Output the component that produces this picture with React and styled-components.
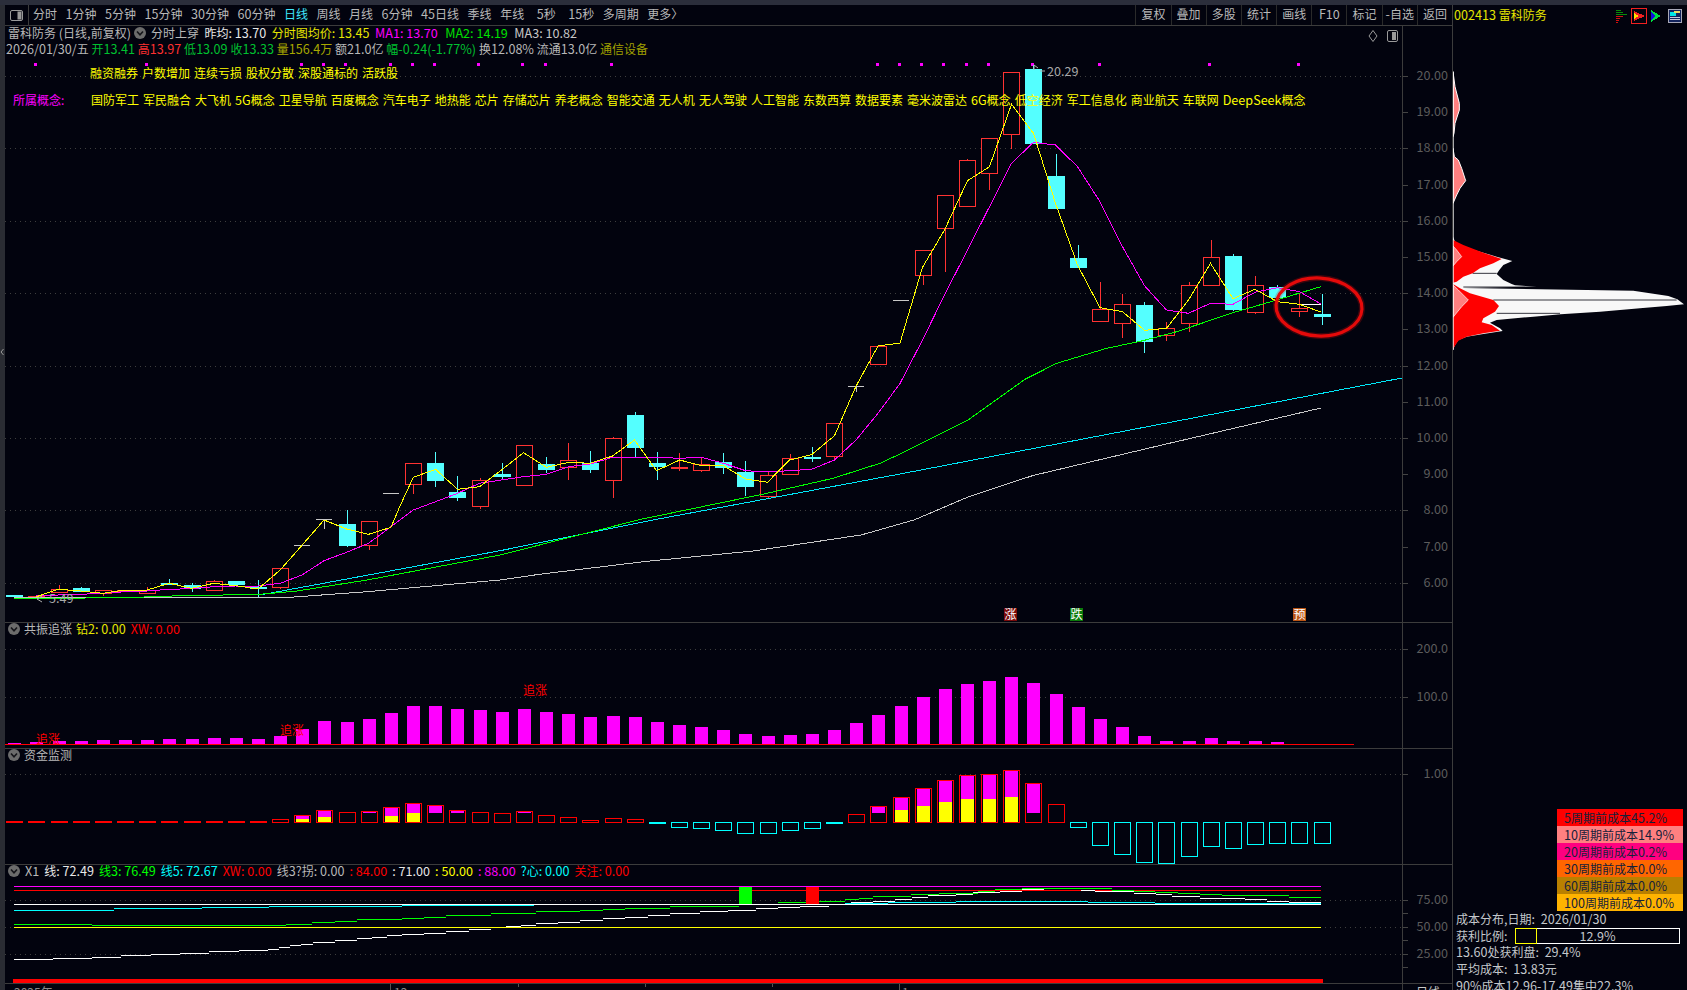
import React from 'react';
import styled, { createGlobalStyle } from 'styled-components';

const BG = '#02030e';
const LINE = '#3c3c3c';

const GlobalStyle = createGlobalStyle`
  html, body {
    margin: 0;
    padding: 0;
    background: ${BG};
  }
  body {
    font-family: "Noto Sans CJK SC", "Liberation Sans", sans-serif;
    font-size: 12px;
    line-height: 14px;
    color: #b8b8b8;
  }
  svg text {
    font-family: "Noto Sans CJK SC", "Liberation Sans", sans-serif;
  }
`;

const Frame = styled.div`
  width: 1687px;
  height: 990px;
  overflow: hidden;
  display: flex;
  flex-direction: column;
  background: ${BG};
`;

const TopStrip = styled.div`
  height: 5px;
  flex: none;
  background: #2b2e3b;
`;

const Shell = styled.div`
  flex: 1;
  min-height: 0;
  display: flex;
`;

const Rail = styled.div`
  width: 5px;
  flex: none;
  background: #2a2c33;
  position: relative;
`;

const RailArrow = styled.svg`
  position: absolute;
  left: 0;
  top: 342px;
`;

const Workspace = styled.div`
  width: 1447px;
  flex: none;
  display: flex;
  flex-direction: column;
`;

const Toolbar = styled.div`
  height: 20px;
  flex: none;
  display: flex;
  align-items: center;
  border-bottom: 1px solid ${LINE};
  white-space: nowrap;
`;

const ToggleBox = styled.div`
  width: 23px;
  height: 20px;
  flex: none;
  border-right: 1px solid ${LINE};
  display: flex;
  align-items: center;
  justify-content: center;
`;

const PeriodList = styled.div`
  display: flex;
  align-items: center;
  gap: 8.5px;
  padding-left: 4px;
  padding-bottom: 2px;
`;

const Period = styled.span`
  color: ${(p) => (p.$active ? '#3fe8ff' : '#b8b8b8')};
  margin-left: ${(p) => p.$shift || 0}px;
`;

const ToolGroup = styled.div`
  margin-left: auto;
  display: flex;
  height: 100%;
`;

const ToolButton = styled.span`
  width: 35.2px;
  border-left: 1px solid #2a2a2a;
  display: flex;
  align-items: center;
  justify-content: center;
  padding-bottom: 2px;
  box-sizing: border-box;
  color: #b8b8b8;
`;

const Pane = styled.div`
  height: ${(p) => p.$h}px;
  flex: none;
  display: flex;
  border-bottom: 1px solid ${LINE};
  box-sizing: border-box;
`;

const Plot = styled.div`
  width: 1397px;
  flex: none;
  position: relative;
`;

const ChartSvg = styled.svg`
  display: block;
`;

const AxisCol = styled.div`
  width: 50px;
  flex: none;
  border-left: 1px solid ${LINE};
  box-sizing: border-box;
`;

const Legend = styled.div`
  position: absolute;
  left: 1px;
  top: ${(p) => p.$top ?? -1}px;
  right: 0;
  display: flex;
  flex-direction: column;
  white-space: nowrap;
`;

const LegendRow = styled.div`
  height: 16px;
  margin-top: ${(p) => p.$mt || 0}px;
  display: flex;
  align-items: center;
  gap: ${(p) => (p.$gap === undefined ? 4 : p.$gap)}px;
  padding-left: ${(p) => p.$pl || 0}px;
`;

const Val = styled.span`
  color: ${(p) => p.$c || '#b8b8b8'};
  margin-left: ${(p) => p.$ml || 0}px;
`;

// digits and Latin run a little larger than the CJK in the terminal's font
const Num = styled.span`
  font-size: 12.6px;
`;

const Chevron = styled.svg`
  flex: none;
  margin-left: ${(p) => p.$ml || 0}px;
`;

const RowLabel = styled.span`
  width: 77px;
  flex: none;
  padding-left: 7px;
  box-sizing: border-box;
  color: #ff00ff;
`;

const ChartMark = styled.span`
  position: absolute;
  color: #ff0000;
  left: ${(p) => p.$x - 5}px;
  top: ${(p) => p.$y}px;
  line-height: 16px;
`;

const CornerIcons = styled.svg`
  position: absolute;
  left: 1361px;
  top: 3px;
`;

const DateRow = styled.div`
  flex: 1;
  display: flex;
  overflow: hidden;
`;

const RightPanel = styled.aside`
  width: 235px;
  flex: none;
  border-left: 1px solid ${LINE};
  display: flex;
  flex-direction: column;
`;

const RightHeader = styled.div`
  height: 21px;
  flex: none;
  display: flex;
  align-items: center;
  gap: 4px;
  padding-left: 1px;
  color: #e6e600;
  white-space: nowrap;
`;

const HeaderName = styled.span`
  padding-bottom: 2px;
`;

const HeaderIcons = styled.svg`
  margin-left: auto;
  flex: none;
`;

const Spacer = styled.div`
  flex: 1;
`;

const CostLegend = styled.div`
  align-self: flex-end;
  margin-right: 5px;
  width: 126px;
  flex: none;
`;

const CostRow = styled.div`
  height: 17px;
  line-height: 17px;
  padding-left: 7px;
  background: ${(p) => p.$bg};
  color: #15203a;
  white-space: nowrap;
`;

const Info = styled.div`
  height: 79px;
  flex: none;
  padding-left: 3px;
  overflow: hidden;
  color: #c4c8cc;
  white-space: nowrap;
`;

const InfoLine = styled.div`
  height: 16.7px;
  line-height: 16.7px;
  display: flex;
  align-items: center;
`;

const InfoText = styled.span`
  white-space: pre;
`;

const ProfitBar = styled.div`
  position: relative;
  width: 165px;
  height: 16px;
  margin-left: auto;
  margin-right: 8px;
  box-sizing: border-box;
  border: 1px solid #ffffff;
  text-align: center;
  line-height: 14px;
`;

const ProfitFill = styled.div`
  position: absolute;
  left: -1px;
  top: -1px;
  bottom: -1px;
  width: 22px;
  box-sizing: border-box;
  border: 1px solid #ffff00;
`;

// wraps the ASCII runs of a label so they get the digit size
const mix = (text) =>
  text.split(/([\x20-\x7e]+)/).filter(Boolean).map((part, i) =>
    /^[\x20-\x7e]+$/.test(part) ? <Num key={i}>{part}</Num> : part
  );

// ---- chart data, all in page pixels ----

const cx = (i) => 14.3 + 22.156 * i;

// type, body top, body bottom, wick top, wick bottom
const candles = [
  ['c', 595, 597], ['r', 595.5, 597], ['r', 588.5, 591.7, 585, 591.7], ['c', 588, 592, 587, 592],
  ['r', 590.3, 593.7, 590.3, 596], ['r', 590, 591], ['r', 590, 592.7, 587, 592.7], ['c', 583, 585.3, 579, 585.3],
  ['c', 585, 588.7, 583, 591.7], ['r', 581.3, 590.7, 580, 590.7], ['c', 581, 585], ['c', 586.7, 589, 580, 596.7],
  ['r', 568.3, 587.3, 568.3, 588.5], ['w', 545.3, 545.3], ['w', 519.3, 519.3, 519.3, 528.7], ['c', 524.3, 546, 510, 547],
  ['r', 521.3, 545.7, 521.3, 549.7], ['w', 493.3, 493.3], ['r', 463.3, 484.7, 463.3, 494], ['c', 463, 481, 452.3, 486.7],
  ['c', 492, 498, 476, 501], ['r', 480.3, 506.7, 478.3, 509], ['c', 474, 477, 463.3, 480], ['r', 445.3, 485.7],
  ['c', 464, 470, 457.3, 472.7], ['r', 460.3, 467.7, 443, 480], ['c', 463, 470, 451, 472.7], ['r', 438.3, 480.3, 437.3, 497.7],
  ['c', 415, 447.7, 412.3, 457], ['c', 463, 467, 452, 479.7], ['s', 467, 469, 453, 470.7], ['r', 463.7, 469.7, 457.3, 472],
  ['c', 462, 468, 453.3, 474], ['c', 472, 487, 461, 496], ['r', 475.3, 496.7, 471.3, 498.7], ['r', 458.3, 474.7, 454, 474.7],
  ['c', 457, 458, 447.3, 462], ['r', 423.3, 456.7, 423.3, 459.3], ['w', 386.3, 386.3, 386.3, 392], ['r', 346, 364],
  ['w', 300, 300], ['r', 250.3, 275.3, 250.3, 284.7], ['r', 195.3, 228.3, 195.3, 271.7], ['r', 160.3, 206.7, 158.7, 206.7],
  ['r', 138.3, 173.3, 138.3, 190], ['r', 72.3, 134.7, 72.3, 149], ['c', 69, 143.7, 65, 143.7], ['c', 176, 208.7, 154.3, 208.7],
  ['c', 258, 267.7, 245, 267.7], ['r', 309.3, 321.7, 282, 321.7], ['r', 304.3, 323.7, 294, 337.7], ['c', 305, 341.7, 302.3, 352.7],
  ['r', 328.3, 335, 322.3, 340.7], ['r', 285.3, 323.7, 282, 331.7], ['r', 257.3, 285.7, 240.3, 285.7], ['c', 256, 310, 254, 310.7],
  ['r', 285.3, 312.7, 276, 314.3], ['c', 287, 298.3, 285.3, 298.3], ['r', 308.3, 311.7, 293.3, 316.7], ['c', 314.3, 317, 294, 325],
];

const ma1 = [
  [36.4, 596.7], [58.4, 589.3], [80.5, 591], [102.6, 593.3], [124.8, 590], [147, 590], [169.4, 583.3], [191.5, 588.3],
  [213.7, 583.3], [235.8, 585.7], [258, 589], [280.2, 570], [302, 545.3], [324, 520], [346.5, 529], [368.5, 534.3],
  [391, 527.3], [400, 506], [413.3, 477.3], [435.6, 469.3], [457.5, 489.3], [479.5, 486.7], [501.5, 470], [523.5, 452.7],
  [546.5, 467.3], [568.7, 462.3], [590.5, 463.3], [612.5, 456], [634.5, 440], [656.5, 470.7], [679.6, 460], [701.5, 465.7],
  [723.5, 465.7], [745.5, 479], [767.5, 482.3], [789.5, 460], [811.5, 454.7], [834.5, 435.7], [856, 386.3], [878, 346],
  [900, 343], [922.5, 267.3], [944.5, 230], [967.5, 180.7], [989.5, 166.7], [1011.5, 104.3], [1033.5, 133.3], [1055.5, 203.3],
  [1077.5, 265], [1100, 307.7], [1122.5, 311.7], [1144.5, 330.3], [1166.5, 328.3], [1188.5, 300], [1210.5, 263.3],
  [1233, 298.7], [1255, 289.3], [1277.5, 301.7], [1299.5, 304.3], [1321.5, 312.3],
];

const ma2 = [
  [36.4, 596], [58.4, 595], [80.5, 594.3], [102.6, 593.3], [124.8, 591.7], [147, 591], [169.4, 589.3], [191.5, 588.7],
  [213.7, 586.7], [235.8, 586], [258, 586], [280.2, 583.3], [302, 575], [324, 560.7], [346.5, 552.3], [368.5, 543.3],
  [391, 526.7], [413.3, 510], [435.6, 501.7], [457.5, 493.3], [479.5, 483.3], [501.5, 480], [523.5, 476.7], [546.5, 474.3],
  [568.7, 466.7], [590.5, 464], [612.5, 457.3], [634.5, 457.3], [656.5, 457.3], [679.6, 458.3], [701.5, 457.3], [723.5, 463.3],
  [745.5, 470.7], [767.5, 472], [789.5, 470.7], [811.5, 469.3], [834.5, 460], [856, 440], [878, 413.3], [900, 383.5],
  [922.5, 340], [944.5, 295], [967.5, 250], [989.5, 206.7], [1011.5, 163.3], [1033.5, 142.3], [1055.5, 145], [1077.5, 166.7],
  [1100, 201.7], [1122.5, 246.7], [1144.5, 285.7], [1166.5, 310], [1188.5, 313.3], [1210.5, 303.3], [1233, 304.3],
  [1255, 292.3], [1277.5, 287.7], [1299.5, 291.7], [1321.5, 304.3],
];

const ma3 = [
  [14, 599], [136, 597.3], [200, 595], [223, 595], [260, 594.3], [297, 591], [367, 580], [500, 555], [641, 519.3],
  [767, 493.3], [833, 478.3], [880, 463.3], [900, 454], [968, 420], [1025, 379.3], [1056.7, 363.3], [1106.7, 348.3],
  [1143, 340.7], [1176.7, 331.7], [1233, 312.7], [1276.7, 300], [1320.7, 286.7],
];

const ma4 = [[260, 595], [500, 550.7], [656.7, 519.3], [900, 474], [1402, 378]];

const ma5 = [
  [14, 597], [290, 597.3], [367, 591.7], [500, 580], [538, 574.5], [645, 561.5], [753, 551], [861, 535], [914, 520], [968, 497],
  [1033, 475.5], [1162, 445], [1321, 408],
];

const signalDots = [35, 146.4, 301, 323.6, 345.5, 390, 412.5, 434.8, 478, 522, 545, 611, 877.5, 899.5, 921.5, 943.5, 966, 988, 1032, 1099, 1209, 1298];

// bar tops for the 共振追涨 pane, one per candle
const surge = [
  369, 366, 363, 363, 360, 360, 360, 357, 357, 354, 354, 357, 348, 327, 303, 306, 297, 279, 258, 258,
  267, 270, 276, 267, 276, 282, 291, 288, 291, 306, 315, 321, 330, 342, 348, 345, 342, 330, 309, 285,
  258, 231, 207, 192, 183, 171, 189, 222, 261, 297, 321, 348, 363, 363, 354, 363, 363, 366,
];

// kind, box end, magenta top, yellow top (zoom rows, zero at 607)
const flow = [
  ['rs', 604], ['rs', 604], ['r', 602], ['r', 602], ['r', 602], ['r', 602], ['r', 602], ['r', 602], ['r', 602], ['r', 602],
  ['r', 602], ['rs', 604], ['r', 598], ['r', 586, 586, 597], ['r', 571, 571, 591], ['r', 577, 577], ['r', 574, 574], ['r', 562, 562, 588], ['r', 550, 550, 579], ['r', 556, 556],
  ['r', 571, 571], ['r', 577, 577], ['r', 580], ['r', 574, 574], ['r', 586], ['r', 592], ['r', 601], ['r', 595], ['r', 598], ['cs', 609],
  ['c', 620], ['c', 623], ['c', 629], ['c', 638], ['c', 638], ['c', 629], ['c', 623], ['cs', 608], ['r', 583], ['r', 559, 559],
  ['r', 532, 532, 570], ['r', 504, 504, 558], ['r', 481, 481, 546], ['r', 466, 466, 537], ['r', 463, 463, 537], ['r', 451, 451, 531], ['r', 490, 490], ['r', 553], ['c', 620], ['c', 674],
  ['c', 701], ['c', 725], ['c', 728], ['c', 707], ['c', 677], ['c', 683], ['c', 671], ['c', 668], ['c', 668], ['c', 668],
];

const zy = (v) => 620 + v / 3;

const x1Cyan = [[14, 910.3], [25, 909.7], [114, 908.3], [202, 907.3], [269, 906.3], [402, 905.3], [534, 904.3], [600, 903.7], [845, 902.7], [888, 901.7], [956, 900.7], [1088, 901.7], [1155, 902.7], [1321, 904.3]];
const x1Green = [[14, 913], [92, 916], [269, 916], [286, 911], [312, 906], [357, 898], [402, 894], [446, 886], [491, 880], [536, 874], [580, 870], [625, 863], [670, 859], [700, 857], [778, 847], [818, 842], [845, 836], [873, 829], [911, 823], [939, 818], [978, 813], [995, 808], [1022, 805], [1088, 805], [1112, 809], [1155, 816], [1178, 820], [1200, 823], [1222, 826], [1267, 826], [1289, 832], [1321, 835]].map(([x, y]) => [x, zy(y)]);
const x1White = [[14, 1018], [91.5, 1010], [180, 998], [268, 986], [312.5, 966], [357, 955], [402, 942], [446, 933], [491, 922], [536, 910], [580, 899], [625, 890], [670, 880], [700, 874], [756, 865], [800, 857], [829, 851], [873, 842], [895, 836], [928, 826], [956, 821], [973, 817], [1000, 814], [1022, 808], [1044, 804], [1067, 804], [1095, 814], [1134, 820], [1156, 823], [1172, 827], [1200, 833], [1222, 835], [1245, 838], [1267, 842], [1289, 845], [1321, 851]].map(([x, y]) => [x, zy(y)]);

const poly = (pts) => pts.map((p) => p.join(',')).join(' ');

// staircase through the points, like the terminal draws it
const stairs = (pts) => {
  const out = [];
  for (let i = 0; i < pts.length - 1; i++) {
    const [x0, y0] = pts[i];
    const [x1, y1] = pts[i + 1];
    const steps = Math.max(1, Math.round(Math.abs(y1 - y0) / 1.5));
    for (let s = 0; s < steps; s++) {
      out.push(`M${x0 + ((x1 - x0) * s) / steps} ${Math.round(y0 + ((y1 - y0) * s) / steps)}H${x0 + ((x1 - x0) * (s + 1)) / steps}`);
    }
  }
  return out.join('');
};

const histWhite = [[159, 530], [165, 545], [190, 560], [240, 575], [290, 590], [337, 603], [310, 615], [298, 630], [290, 642], [310, 660], [335, 672], [345, 676], [410, 680], [190, 684], [700, 692], [805, 708], [832, 718], [852, 733], [800, 738], [720, 745], [600, 755], [482, 763], [400, 770], [290, 780], [270, 788], [300, 805], [308, 813], [250, 822], [200, 830], [175, 840], [165, 855], [159, 870]];
const histRedA = [[159, 540], [190, 555], [250, 578], [305, 597], [280, 610], [240, 625], [218, 640], [190, 650], [170, 665], [159, 668]];
const histRedB = [[159, 672], [180, 685], [210, 700], [280, 720], [297, 738], [285, 755], [250, 775], [245, 787], [275, 795], [300, 812], [250, 820], [200, 830], [175, 842], [159, 866]];
const histPinkA = [[159, 558], [170, 570], [185, 590], [170, 605], [159, 618]];
const histPinkB = [[159, 675], [175, 690], [205, 720], [185, 740], [159, 772]];
const histPinkC = [[159, 35], [165, 80], [178, 130], [178, 150], [165, 190], [162, 220], [159, 230]];
const histPinkD = [[159, 265], [163, 290], [175, 300], [185, 325], [197, 362], [180, 385], [170, 405], [159, 430]];

const DownCircle = ({ ml }) => (
  <Chevron $ml={ml} width="12" height="12" viewBox="0 0 12 12">
    <circle cx="6" cy="6" r="6" fill="#6c6c6c" />
    <path d="M3 4.5 L6 7.8 L9 4.5" fill="none" stroke="#15151a" strokeWidth="1.6" />
  </Chevron>
);

function Candle({ i, d }) {
  const [kind, top, bottom, wickTop = top, wickBottom = bottom] = d;
  const x = Math.round(cx(i));
  if (kind === 'w') {
    return (
      <g stroke="#c8c8c8">
        <path d={`M${x - 8} ${top + 0.5}H${x + 8}M${x + 0.5} ${wickTop}V${wickBottom}`} />
      </g>
    );
  }
  if (kind === 'c') {
    return (
      <g>
        <path d={`M${x + 0.5} ${wickTop}V${wickBottom}`} stroke="#54ffff" />
        <rect x={x - 8} y={top} width="17" height={Math.max(bottom - top, 1.5)} fill="#54ffff" />
      </g>
    );
  }
  if (kind === 's') {
    return (
      <g fill="#ff3232">
        <path d={`M${x + 0.5} ${wickTop}V${wickBottom}`} stroke="#ff3232" />
        <rect x={x - 8} y={top} width="17" height={bottom - top} />
      </g>
    );
  }
  return (
    <g stroke="#ff3232">
      <path d={`M${x + 0.5} ${wickTop}V${wickBottom}`} />
      <rect x={x - 8 + 0.5} y={Math.round(top) + 0.5} width="16" height={Math.max(Math.round(bottom - top), 1)} fill={BG} />
    </g>
  );
}

function Grid({ rows }) {
  return (
    <g stroke="#3e3e3e" strokeDasharray="1 4">
      {rows.map((y) => (
        <path key={y} d={`M5 ${y + 0.5}H1402`} />
      ))}
    </g>
  );
}

function Signal({ x, bg, children }) {
  return (
    <g>
      <rect x={x} y="608" width="13" height="13" fill={bg} />
      <text x={x + 6.5} y="619" fontSize="12" textAnchor="middle" fill="#fff">{children}</text>
    </g>
  );
}

function MainChart() {
  const gridRows = [20, 18, 16, 14, 12, 10, 8, 6].map((p) => Math.round(76 + (20 - p) * 36.2));
  return (
    <ChartSvg width="1397" height="596" viewBox="5 26 1397 596" shapeRendering="crispEdges">
      <Grid rows={gridRows} />
      {signalDots.map((x) => (
        <rect key={x} x={x - 1.5} y="63" width="3" height="3" fill="#ff00ff" />
      ))}
      {candles.map((d, i) => <Candle key={i} i={i} d={d} />)}
      <path d="M1300 304.5H1321" stroke="#ffffff" />
      <polyline points={poly(ma5)} fill="none" stroke="#c8c8c8" />
      <polyline points={poly(ma4)} fill="none" stroke="#00e8f8" />
      <polyline points={poly(ma3)} fill="none" stroke="#00ff00" />
      <polyline points={poly(ma2)} fill="none" stroke="#ff00ff" />
      <polyline points={poly(ma1)} fill="none" stroke="#ffff00" />
      <g fill="none" stroke="#b0b0b0" shapeRendering="auto">
        <path d="M1034 65 L1038 68 M1034 65 L1034 70 M1040 71H1045" />
        <path d="M42 596 L37 599 L42 602" />
      </g>
      <text x="1047" y="76" fontSize="12.6" fill="#a8a8a8">20.29</text>
      <text x="49" y="603" fontSize="12.6" fill="#a8a8a8">5.49</text>
      <Signal x={1004} bg="#7a0a0a">涨</Signal>
      <Signal x={1070} bg="#0a7a0a">跌</Signal>
      <Signal x={1293} bg="#bb5514">预</Signal>
      <g fill="none" shapeRendering="auto" transform="rotate(3 1319 307)">
        <ellipse cx="1319" cy="307" rx="43" ry="29" stroke="#e40a0a" strokeOpacity="0.25" strokeWidth="6" />
        <ellipse cx="1319" cy="307" rx="43" ry="29" stroke="#e40a0a" strokeWidth="3.2" />
      </g>
    </ChartSvg>
  );
}

function SurgeChart() {
  return (
    <ChartSvg width="1397" height="125" viewBox="5 623 1397 125" shapeRendering="crispEdges">
      <Grid rows={[649, 697]} />
      {surge.map((v, i) => (
        <rect key={i} x={Math.round(cx(i)) - 6} y={zy(v)} width="13" height={744 - zy(v)} fill="#ff00ff" />
      ))}
      <path d="M5 744.5H1354" stroke="#ff0000" />
    </ChartSvg>
  );
}

function FlowBar({ i, d }) {
  const [kind, end, magenta, yellow] = d;
  const x = Math.round(cx(i));
  const baseY = 822;
  const color = kind[0] === 'r' ? '#ff0000' : '#00ffff';
  const y0 = Math.round(kind[0] === 'r' ? zy(end) : baseY);
  const y1 = Math.round(kind[0] === 'r' ? baseY : zy(end));
  if (kind.length > 1) {
    return <rect x={x - 8} y={y0} width="17" height={Math.max(y1 - y0, 2)} fill={color} />;
  }
  return (
    <g>
      {magenta !== undefined && (
        <rect x={x - 6} y={zy(magenta)} width="13" height={(yellow ? zy(yellow) : 813) - zy(magenta)} fill="#ff00ff" />
      )}
      {yellow !== undefined && (
        <rect x={x - 6} y={zy(yellow)} width="13" height={baseY - zy(yellow)} fill="#ffff00" />
      )}
      <rect x={x - 7.5} y={y0 + 0.5} width="16" height={Math.max(y1 - y0, 1)} fill="none" stroke={color} />
    </g>
  );
}

function FlowChart() {
  return (
    <ChartSvg width="1397" height="115" viewBox="5 749 1397 115" shapeRendering="crispEdges">
      <Grid rows={[774]} />
      {flow.map((d, i) => <FlowBar key={i} i={i} d={d} />)}
    </ChartSvg>
  );
}

function OscChart() {
  return (
    <ChartSvg width="1397" height="118" viewBox="5 865 1397 118" shapeRendering="crispEdges">
      <Grid rows={[900, 927, 954]} />
      <path d="M14 886.5H1321" stroke="#ff00ff" />
      <path d="M14 890.5H1321" stroke="#ff0000" />
      <path d={stairs(x1White)} stroke="#ffffff" fill="none" />
      <path d={stairs(x1Green)} stroke="#00ff00" fill="none" />
      <path d={stairs(x1Cyan)} stroke="#00ffff" fill="none" />
      <path d="M14 904.5H1321" stroke="#ffffff" />
      <path d="M14 927.5H1321" stroke="#ffff00" />
      <rect x="739" y="887" width="13" height="17" fill="#00ff00" />
      <rect x="806" y="887" width="13" height="17" fill="#ff0000" />
      <rect x="13" y="979" width="1310" height="4" fill="#ff0000" />
    </ChartSvg>
  );
}

function Axis({ height, top, labels, ticks }) {
  return (
    <AxisCol>
      <ChartSvg width="49" height={height} viewBox={`1402 ${top} 49 ${height}`}>
        {ticks.map((y) => (
          <path key={y} d={`M1402 ${y + 0.5}H1407`} stroke="#444" shapeRendering="crispEdges" />
        ))}
        {labels.map(([text, y]) => (
          <text key={text} x="1447" y={y + 4} fontSize="12.6" textAnchor="end" fill="#5c5c5c">{text}</text>
        ))}
      </ChartSvg>
    </AxisCol>
  );
}

const priceLabels = [];
for (let p = 20; p >= 6; p--) {
  priceLabels.push([`${p}.00`, Math.round(76 + (20 - p) * 36.2)]);
}

const periods = [
  ['分时'], ['1分钟'], ['5分钟'], ['15分钟'], ['30分钟'], ['60分钟'], ['日线', true], ['周线'], ['月线'], ['6分钟'],
  ['45日线'], ['季线'], ['年线'], ['5秒', false, 4], ['15秒', false, 4], ['多周期'], ['更多〉'],
];
const tools = ['复权', '叠加', '多股', '统计', '画线', 'F10', '标记', '-自选', '返回'];
const tags = ['融资融券', '户数增加', '连续亏损', '股权分散', '深股通标的', '活跃股'];
const concepts = ['国防军工', '军民融合', '大飞机', '5G概念', '卫星导航', '百度概念', '汽车电子', '地热能', '芯片', '存储芯片', '养老概念', '智能交通', '无人机', '无人驾驶', '人工智能', '东数西算', '数据要素', '毫米波雷达', '6G概念', '低空经济', '军工信息化', '商业航天', '车联网', 'DeepSeek概念'];
const costs = [
  ['#ff0000', '5周期前成本45.2%'],
  ['#ff8080', '10周期前成本14.9%'],
  ['#ff0080', '20周期前成本0.2%'],
  ['#ff6600', '30周期前成本0.0%'],
  ['#b98000', '60周期前成本0.0%'],
  ['#ffb300', '100周期前成本0.0%'],
];
const quoteRow = [
  ['#b8b8b8', '2026/01/30/五'],
  ['#00c030', '开13.41'],
  ['#ff3030', '高13.97'],
  ['#00c030', '低13.09'],
  ['#00c030', '收13.33'],
  ['#a8a800', '量156.4万'],
  ['#b8b8b8', '额21.0亿'],
  ['#00c030', '幅-0.24(-1.77%)'],
  ['#b8b8b8', '换12.08%'],
  ['#b8b8b8', '流通13.0亿'],
  ['#a0a000', '通信设备'],
];
const oscRow = [
  ['#e8e8e8', '线: 72.49'],
  ['#00ff00', '线3: 76.49'],
  ['#00ffff', '线5: 72.67'],
  ['#ff0000', 'XW: 0.00'],
  ['#b8b8b8', '线3?拐: 0.00'],
  ['#ff0000', ': 84.00'],
  ['#e8e8e8', ': 71.00'],
  ['#ffff00', ': 50.00'],
  ['#ff00ff', ': 88.00'],
  ['#00ffff', '?心: 0.00'],
  ['#ff0000', '关注: 0.00'],
];

export default function App() {
  return (
    <Frame>
      <GlobalStyle />
      <TopStrip />
      <Shell>
        <Rail>
          <RailArrow width="5" height="10" viewBox="0 0 5 10">
            <path d="M3.5 2 L1 5 L3.5 8" fill="none" stroke="#999" />
          </RailArrow>
        </Rail>
        <Workspace>
          <Toolbar>
            <ToggleBox>
              <svg width="13" height="11" viewBox="0 0 13 11">
                <rect x="0.5" y="0.5" width="12" height="10" rx="1.5" fill="none" stroke="#9a9a9a" />
                <rect x="7.5" y="1.5" width="4" height="8" fill="#9a9a9a" />
              </svg>
            </ToggleBox>
            <PeriodList>
              {periods.map(([label, active, shift]) => (
                <Period key={label} $active={active} $shift={shift}>{mix(label)}</Period>
              ))}
            </PeriodList>
            <ToolGroup>
              {tools.map((t) => <ToolButton key={t}>{mix(t)}</ToolButton>)}
            </ToolGroup>
          </Toolbar>

          <Pane $h={597}>
            <Plot>
              <MainChart />
              <Legend>
                <LegendRow $gap={5.5} $pl={2}>
                  <Val>{mix('雷科防务 (日线,前复权)')}</Val>
                  <DownCircle ml={-2} />
                  <Val $ml={-1}>分时上穿</Val>
                  <Val $c="#e8e8e8">{mix('昨均: 13.70')}</Val>
                  <Val $c="#e6e600">{mix('分时图均价: 13.45')}</Val>
                  <Val $c="#ff00ff">{mix('MA1: 13.70')}</Val>
                  <Val $c="#00e000" $ml={2}>{mix('MA2: 14.19')}</Val>
                  <Val $c="#c8c8c8" $ml={1}>{mix('MA3: 10.82')}</Val>
                </LegendRow>
                <LegendRow $gap={2.8}>
                  {quoteRow.map(([c, t]) => <Val key={t} $c={c}>{mix(t)}</Val>)}
                </LegendRow>
                <LegendRow $mt={7.5} $pl={84}>
                  {tags.map((t) => <Val key={t} $c="#ffff00">{t}</Val>)}
                </LegendRow>
                <LegendRow $mt={11}>
                  <RowLabel>所属概念:</RowLabel>
                  <Val />
                  {concepts.map((t) => <Val key={t} $c="#ffff00">{mix(t)}</Val>)}
                </LegendRow>
              </Legend>
              <CornerIcons width="32" height="14" viewBox="0 0 32 14">
                <path d="M7 1.5 L11 7 L7 12.5 L3 7 Z" fill="none" stroke="#9a9a9a" />
                <rect x="21.5" y="1.5" width="10" height="11" rx="1.5" fill="none" stroke="#9a9a9a" />
                <rect x="26" y="3" width="4" height="8" fill="#9a9a9a" />
              </CornerIcons>
            </Plot>
            <Axis height={596} top={26} labels={priceLabels} ticks={priceLabels.map((l) => l[1])} />
          </Pane>

          <Pane $h={126}>
            <Plot>
              <SurgeChart />
              <Legend $top={-2}>
                <LegendRow $pl={2}>
                  <DownCircle />
                  <Val>共振追涨</Val>
                  <Val $c="#e6e600">{mix('钻2: 0.00')}</Val>
                  <Val $c="#ff0000" $ml={1}>{mix('XW: 0.00')}</Val>
                </LegendRow>
              </Legend>
              <ChartMark $x={36} $y={108}>追涨</ChartMark>
              <ChartMark $x={280} $y={99}>追涨</ChartMark>
              <ChartMark $x={523} $y={59}>追涨</ChartMark>
            </Plot>
            <Axis height={125} top={623} labels={[['200.0', 649], ['100.0', 697]]} ticks={[649, 697]} />
          </Pane>

          <Pane $h={116}>
            <Plot>
              <FlowChart />
              <Legend $top={-2}>
                <LegendRow $pl={2}>
                  <DownCircle />
                  <Val>资金监测</Val>
                </LegendRow>
              </Legend>
            </Plot>
            <Axis height={115} top={749} labels={[['1.00', 774]]} ticks={[774]} />
          </Pane>

          <Pane $h={119}>
            <Plot>
              <OscChart />
              <Legend $top={-2}>
                <LegendRow $pl={2} $gap={5}>
                  <DownCircle />
                  <Val>{mix('X1')}</Val>
                  {oscRow.map(([c, t]) => <Val key={t} $c={c}>{mix(t)}</Val>)}
                </LegendRow>
              </Legend>
            </Plot>
            <Axis height={118} top={865} labels={[['75.00', 900], ['50.00', 927], ['25.00', 954]]} ticks={[900, 913, 927, 940, 954, 967]} />
          </Pane>

          <DateRow>
            <ChartSvg width="1397" height="20" viewBox="5 984 1397 20">
              <g stroke="#555" shapeRendering="crispEdges">
                <path d="M390.5 984V990M518.5 984V987M645.5 984V987M772.5 984V987M899.5 984V990" />
              </g>
              <g fontSize="12" fill="#8a8a8a">
                <text x="14" y="997">2025年</text>
                <text x="394" y="997">12</text>
                <text x="902" y="997">1</text>
              </g>
            </ChartSvg>
            <AxisCol>
              <ChartSvg width="49" height="20" viewBox="1402 984 49 20">
                <text x="1415" y="997" fontSize="12" fill="#c8c8c8">日线</text>
              </ChartSvg>
            </AxisCol>
          </DateRow>
        </Workspace>

        <RightPanel>
          <RightHeader>
            <HeaderName>{mix('002413 雷科防务')}</HeaderName>
            <HeaderIcons width="74" height="18" viewBox="0 0 74 18">
              <g shapeRendering="crispEdges">
                <path d="M2 3h5v1H2zM2 5h7v1H2zM2 7h11v1H2z" fill="#0a8a0a" />
                <path d="M2 9h7v1H2zM2 11h4v1H2zM2 13h3v1H2zM2 15h2v1H2z" fill="#d01010" />
                <rect x="17.5" y="1.5" width="15" height="15" fill="none" stroke="#f02020" />
                <path d="M20 4 L31 9 L20 14 Z" fill="#f02020" />
                <path d="M20 6 L25 9 L20 12 Z" fill="#ffe000" />
                <path d="M37 3 L47 9 L37 15 Z" fill="#00e040" />
                <path d="M37 5 L42 9 L37 13 Z" fill="#1010e0" />
                <rect x="54" y="2" width="14" height="14" fill="#a8a8b8" />
                <rect x="55" y="3" width="12" height="12" fill="#13235c" />
                <rect x="56" y="5" width="6" height="4" fill="#00e8e8" />
                <rect x="60" y="4" width="6" height="2" fill="#e8d860" />
                <path d="M56 10h10v1H56zM56 12h10v1H56z" fill="#c8c8d8" />
              </g>
            </HeaderIcons>
          </RightHeader>
          <ChartSvg width="234" height="340" viewBox="159 -102 702 1020">
            <polygon points={poly(histPinkC)} fill="#ff8080" stroke="#fff" strokeWidth="3" />
            <polygon points={poly(histPinkD)} fill="#ff8080" stroke="#fff" strokeWidth="3" />
            <polygon points={poly(histWhite)} fill="#f8f8f8" />
            <path d="M218 640H290M190 681H420M280 720H830M290 760H480" stroke="#02030e" strokeWidth="2.4" />
            <polygon points={poly(histRedA)} fill="#ff0000" />
            <polygon points={poly(histRedB)} fill="#ff0000" />
            <polygon points={poly(histPinkA)} fill="#ff8080" stroke="#fff" strokeWidth="2" />
            <polygon points={poly(histPinkB)} fill="#ff8080" stroke="#fff" strokeWidth="2" />
            <path d="M159.5 35V870" stroke="#fff" strokeWidth="3" />
          </ChartSvg>
          <Spacer />
          <CostLegend>
            {costs.map(([bg, text]) => <CostRow key={text} $bg={bg}>{mix(text)}</CostRow>)}
          </CostLegend>
          <Info>
            <InfoLine><InfoText>{mix('成本分布,日期:  2026/01/30')}</InfoText></InfoLine>
            <InfoLine>
              <InfoText>{mix('获利比例:')}</InfoText>
              <ProfitBar>
                <ProfitFill />
                {mix('12.9%')}
              </ProfitBar>
            </InfoLine>
            <InfoLine><InfoText>{mix('13.60处获利盘:  29.4%')}</InfoText></InfoLine>
            <InfoLine><InfoText>{mix('平均成本:  13.83元')}</InfoText></InfoLine>
            <InfoLine><InfoText>{mix('90%成本12.96-17.49集中22.3%')}</InfoText></InfoLine>
          </Info>
        </RightPanel>
      </Shell>
    </Frame>
  );
}
